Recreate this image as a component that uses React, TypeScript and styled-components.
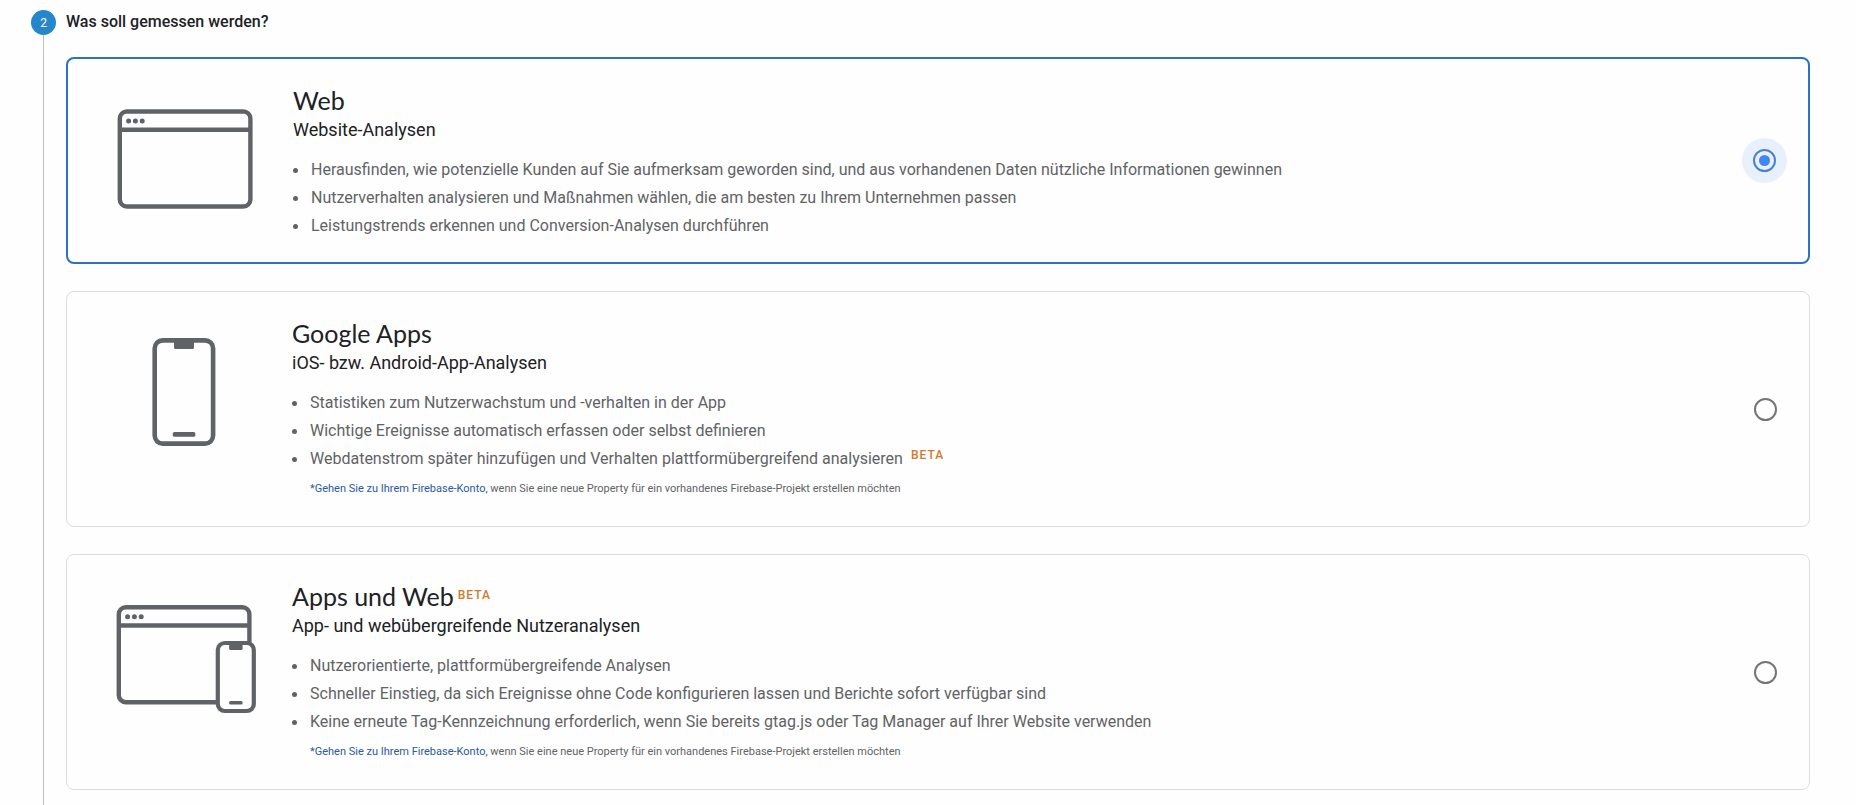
import React, { useState } from 'react';
import styled, { createGlobalStyle } from 'styled-components';

const GlobalStyle = createGlobalStyle`
  *, *::before, *::after { box-sizing: border-box; }
  body {
    margin: 0;
    background: #fefefe;
    color: #202124;
    font-family: Roboto, "Liberation Sans", sans-serif;
  }
`;

const Step = styled.section`
  display: flex;
  gap: 10px;
  min-height: 100vh;
  padding: 10px 46px 0 31px;
`;

const Rail = styled.div`
  display: flex;
  flex: none;
  flex-direction: column;
  align-items: center;
  width: 25px;
`;

const StepNumber = styled.span`
  width: 25px;
  height: 25px;
  border-radius: 50%;
  background: #2586cb;
  color: #fff;
  font-size: 12px;
  line-height: 26px;
  text-align: center;
`;

const RailLine = styled.span`
  flex: 1;
  width: 1px;
  background: #bdbdbd;
`;

const StepBody = styled.div`
  flex: 1;
  min-width: 0;
  padding-bottom: 15px;
`;

const StepTitle = styled.h2`
  margin: 0 0 23px;
  font-size: 16px;
  font-weight: 500;
  line-height: 24px;
`;

const CardList = styled.div`
  display: flex;
  flex-direction: column;
  gap: 27px;
`;

const Card = styled.article<{ $selected: boolean }>`
  display: flex;
  align-items: center;
  padding: 0 21px 0 39px;
  border: ${(p) => (p.$selected ? '2px solid #2c72c4' : '1px solid #dadce0')};
  border-radius: 8px;
`;

const Picture = styled.div`
  flex: none;
  align-self: flex-start;
  width: 186px;
  padding: 46px 0 0 10px;
  svg { display: block; }
`;

const Details = styled.div`
  flex: 1;
  min-width: 0;
  padding: 25px 0 22px;
`;

const CardTitle = styled.h3`
  margin: 0;
  font-family: Lato, "Open Sans", sans-serif;
  font-size: 25px;
  font-weight: 400;
  line-height: 32px;
`;

const Subtitle = styled.p`
  margin: 2px 0 0;
  font-size: 18px;
  line-height: 24px;
`;

const Points = styled.ul`
  margin: 14px 0 0;
  padding: 0;
  list-style: none;
`;

const Point = styled.li`
  display: flex;
  align-items: center;
  color: #616365;
  font-size: 16px;
  line-height: 28px;
  &::before {
    content: '';
    flex: none;
    width: 5px;
    height: 5px;
    margin-right: 13px;
    border-radius: 50%;
    background: #5f6368;
  }
`;

const Beta = styled.sup<{ $inTitle?: boolean }>`
  margin-left: ${(p) => (p.$inTitle ? 4 : 8)}px;
  color: #d07a2c;
  font-family: Roboto, sans-serif;
  font-size: 12px;
  font-weight: 500;
  letter-spacing: 1px;
  line-height: 1;
  vertical-align: ${(p) => (p.$inTitle ? 7 : 5)}px;
`;

const Footnote = styled.p`
  margin: 2px 0 1px 18px;
  color: #616365;
  font-size: 11px;
  line-height: 28px;
`;

const FootLink = styled.a`
  color: #2a59a5;
  text-decoration: none;
`;

const Choice = styled.span<{ $selected: boolean }>`
  display: grid;
  flex: none;
  place-items: center;
  width: 45px;
  height: 45px;
  border-radius: 50%;
  background: ${(p) => (p.$selected ? '#e8f0fc' : 'transparent')};
`;

const Radio = styled.input`
  display: grid;
  place-items: center;
  width: 23px;
  height: 23px;
  margin: 0;
  border: 2px solid #757575;
  border-radius: 50%;
  appearance: none;
  cursor: pointer;
  &:checked { border-color: #4a80d4; }
  &:checked::before {
    content: '';
    width: 11px;
    height: 11px;
    border-radius: 50%;
    background: #4285f4;
  }
`;

const GREY = '#5f6368';

const BrowserShape = () => (
  <g>
    <rect x="2.2" y="2.2" width="130.6" height="95" rx="7" fill="none" stroke={GREY} strokeWidth="4.4" />
    <path d="M3 20.5H132" stroke={GREY} strokeWidth="4.6" />
    <circle cx="11" cy="11.7" r="2.5" fill={GREY} />
    <circle cx="17.8" cy="11.7" r="2.5" fill={GREY} />
    <circle cx="24.6" cy="11.7" r="2.5" fill={GREY} />
  </g>
);

const BrowserIcon = () => (
  <svg width="141" height="114" viewBox="0 0 141 114" aria-hidden="true">
    <g transform="translate(0.6 4.3)"><BrowserShape /></g>
  </svg>
);

const PhoneIcon = () => (
  <svg width="141" height="114" viewBox="0 0 141 114" aria-hidden="true">
    <rect x="38.7" y="2.4" width="58.4" height="103.2" rx="8" fill="none" stroke={GREY} strokeWidth="4.6" />
    <path d="M58 3h20v6.5q0 1.5 -1.5 1.5h-17q-1.5 0 -1.5 -1.5z" fill={GREY} />
    <rect x="56.8" y="94" width="22.5" height="4.8" rx="1.5" fill={GREY} />
  </svg>
);

const BrowserPhoneIcon = () => (
  <svg width="141" height="114" viewBox="0 0 141 114" aria-hidden="true">
    <g transform="translate(0.6 4)">
      <BrowserShape />
      <rect x="101.2" y="38" width="36" height="68" rx="7" fill="#fefefe" stroke={GREY} strokeWidth="4.2" />
      <path d="M112.5 38h13.5v5.5q0 1.5 -1.5 1.5h-10.5q-1.5 0 -1.5 -1.5z" fill={GREY} />
      <rect x="112.5" y="96" width="13.5" height="3.4" rx="1.5" fill={GREY} />
    </g>
  </svg>
);

interface Option {
  id: string;
  title: string;
  beta?: boolean;
  subtitle: string;
  points: { text: string; beta?: boolean }[];
  footnote?: boolean;
  Icon: React.ComponentType;
}

const options: Option[] = [
  {
    id: 'web',
    title: 'Web',
    subtitle: 'Website-Analysen',
    points: [
      { text: 'Herausfinden, wie potenzielle Kunden auf Sie aufmerksam geworden sind, und aus vorhandenen Daten nützliche Informationen gewinnen' },
      { text: 'Nutzerverhalten analysieren und Maßnahmen wählen, die am besten zu Ihrem Unternehmen passen' },
      { text: 'Leistungstrends erkennen und Conversion-Analysen durchführen' },
    ],
    Icon: BrowserIcon,
  },
  {
    id: 'apps',
    title: 'Google Apps',
    subtitle: 'iOS- bzw. Android-App-Analysen',
    points: [
      { text: 'Statistiken zum Nutzerwachstum und -verhalten in der App' },
      { text: 'Wichtige Ereignisse automatisch erfassen oder selbst definieren' },
      { text: 'Webdatenstrom später hinzufügen und Verhalten plattformübergreifend analysieren', beta: true },
    ],
    footnote: true,
    Icon: PhoneIcon,
  },
  {
    id: 'apps-web',
    title: 'Apps und Web',
    beta: true,
    subtitle: 'App- und webübergreifende Nutzeranalysen',
    points: [
      { text: 'Nutzerorientierte, plattformübergreifende Analysen' },
      { text: 'Schneller Einstieg, da sich Ereignisse ohne Code konfigurieren lassen und Berichte sofort verfügbar sind' },
      { text: 'Keine erneute Tag-Kennzeichnung erforderlich, wenn Sie bereits gtag.js oder Tag Manager auf Ihrer Website verwenden' },
    ],
    footnote: true,
    Icon: BrowserPhoneIcon,
  },
];

export default function App() {
  const [selected, setSelected] = useState('web');

  return (
    <>
      <GlobalStyle />
      <Step>
        <Rail>
          <StepNumber>2</StepNumber>
          <RailLine />
        </Rail>
        <StepBody>
          <StepTitle id="step-title">Was soll gemessen werden?</StepTitle>
          <CardList role="radiogroup" aria-labelledby="step-title">
            {options.map(({ id, title, beta, subtitle, points, footnote, Icon }) => (
              <Card key={id} $selected={selected === id}>
                <Picture><Icon /></Picture>
                <Details>
                  <CardTitle>
                    <label htmlFor={id}>{title}</label>
                    {beta && <Beta $inTitle>BETA</Beta>}
                  </CardTitle>
                  <Subtitle>{subtitle}</Subtitle>
                  <Points>
                    {points.map((point) => (
                      <Point key={point.text}>
                        <span>
                          {point.text}
                          {point.beta && <Beta>BETA</Beta>}
                        </span>
                      </Point>
                    ))}
                  </Points>
                  {footnote && (
                    <Footnote>
                      <FootLink href="#firebase">*Gehen Sie zu Ihrem Firebase-Konto,</FootLink>
                      {' wenn Sie eine neue Property für ein vorhandenes Firebase-Projekt erstellen möchten'}
                    </Footnote>
                  )}
                </Details>
                <Choice $selected={selected === id}>
                  <Radio
                    type="radio"
                    id={id}
                    name="measurement"
                    checked={selected === id}
                    onChange={() => setSelected(id)}
                  />
                </Choice>
              </Card>
            ))}
          </CardList>
        </StepBody>
      </Step>
    </>
  );
}
